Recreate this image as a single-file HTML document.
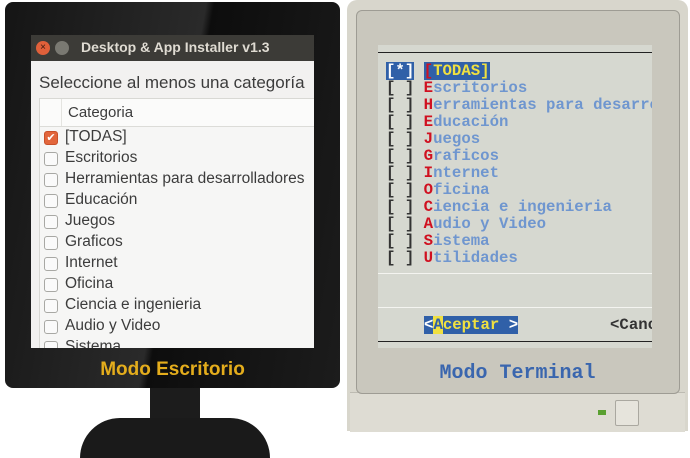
<!DOCTYPE html>
<html><head><style>
body{margin:0;width:690px;height:431px;background:#fff;position:relative;overflow:hidden;font-family:"Liberation Sans",sans-serif}
.a{position:absolute}
.l{left:65px;font-size:15.5px;color:#3c3c3c;white-space:nowrap}
.cb{left:44px;width:12px;height:12px;border:1px solid #a8a8a4;border-radius:3px;background:#fafafa}
.m{font-family:"Liberation Mono",monospace;font-size:15.7px;font-weight:bold;white-space:pre;color:#6f96cf}
.r{color:#d01020}
.k{color:#333}
</style></head><body>
<!-- left monitor -->
<div class="a" style="left:150px;top:380px;width:50px;height:45px;background:#1c1c1c"></div>
<div class="a" style="left:80px;top:418px;width:190px;height:40px;background:#1a1a1a;border-radius:95px 95px 0 0"></div>
<div class="a" style="left:5px;top:2px;width:335px;height:386px;background:linear-gradient(100deg,#151515 0%,#2a2a2a 50%,#0d0d0d 52%,#1c1c1c 100%);border-radius:8px"></div>
<div class="a" style="left:31px;top:35px;width:283px;height:313px;background:#f2f1f0;overflow:hidden">
 <div class="a" style="left:0;top:0;width:283px;height:26px;background:#3c3b37"></div>
 <div class="a" style="left:5px;top:6px;width:14px;height:14px;border-radius:50%;background:#e0603a;color:#3a1a10;font-size:10px;text-align:center;line-height:14px">×</div>
 <div class="a" style="left:24px;top:6px;width:14px;height:14px;border-radius:50%;background:#7a7972"></div>
 <div class="a" style="left:50px;top:4px;color:#dfdbd2;font-size:14px;font-weight:bold">Desktop &amp; App Installer v1.3</div>
 <div class="a" style="left:8px;top:38px;color:#3c3c3c;font-size:17px;white-space:nowrap">Seleccione al menos una categoría</div>
 <div class="a" style="left:8px;top:63px;width:280px;height:250px;background:#f6f6f5;border:1px solid #d8d8d4"></div>
 <div class="a" style="left:9px;top:64px;width:280px;height:27px;background:#fbfbfa;border-bottom:1px solid #dcdcd8"></div>
 <div class="a" style="left:30px;top:64px;width:1px;height:27px;background:#e4e4e0"></div>
</div>
<div class="a" style="left:68px;top:104px;font-size:15px;color:#3c3c3c">Categoria</div>
<div class="a cb" style="top:131px;background:#e2663c;border-color:#c8502a;color:#fff;font-size:11px;line-height:12px;text-align:center">✔</div>
<div class="a l" style="top:128px">[TODAS]</div>
<div class="a cb" style="top:152px"></div><div class="a l" style="top:149px">Escritorios</div>
<div class="a cb" style="top:173px"></div><div class="a l" style="top:170px">Herramientas para desarrolladores</div>
<div class="a cb" style="top:194px"></div><div class="a l" style="top:191px">Educación</div>
<div class="a cb" style="top:215px"></div><div class="a l" style="top:212px">Juegos</div>
<div class="a cb" style="top:236px"></div><div class="a l" style="top:233px">Graficos</div>
<div class="a cb" style="top:257px"></div><div class="a l" style="top:254px">Internet</div>
<div class="a cb" style="top:278px"></div><div class="a l" style="top:275px">Oficina</div>
<div class="a cb" style="top:299px"></div><div class="a l" style="top:296px">Ciencia e ingenieria</div>
<div class="a cb" style="top:320px"></div><div class="a l" style="top:317px">Audio y Video</div>
<div class="a" style="left:31px;top:340px;width:283px;height:8px;overflow:hidden"><div class="a cb" style="left:13px;top:1px"></div><div class="a l" style="left:34px;top:-2px">Sistema</div></div>
<div class="a" style="left:0;top:359px;width:345px;text-align:center;color:#e4ad1c;font-size:19px;font-weight:bold">Modo Escritorio</div>

<!-- right monitor -->
<div class="a" style="left:347px;top:0;width:341px;height:431px;background:#d8d6cc;border-radius:10px 10px 0 0"></div>
<div class="a" style="left:350px;top:392px;width:335px;height:39px;background:#dedcd3;border-top:1px solid #bdbbb2"></div>
<div class="a" style="left:356px;top:10px;width:322px;height:382px;background:#c9c7bd;border-radius:6px;border:1px solid #9e9c94"></div>
<div class="a" style="left:378px;top:45px;width:274px;height:303px;background:#d6d8d0;overflow:hidden">
 <div class="a" style="left:0;top:7px;width:274px;height:1px;background:#222"></div>
 <div class="a" style="left:0;top:228px;width:274px;height:1px;background:#f4f4f0"></div>
 <div class="a" style="left:0;top:262px;width:274px;height:1px;background:#f4f4f0"></div>
 <div class="a" style="left:0;top:296px;width:274px;height:1px;background:#222"></div>
 <div class="a m" style="left:8px;top:18px;line-height:17px"><span style="background:#3060a8;color:#fff">[*]</span> <span style="background:#3060a8;color:#f0e040"><span class="r">[</span>TODAS]</span>
<span class="k">[ ]</span> <span class="r">E</span>scritorios
<span class="k">[ ]</span> <span class="r">H</span>erramientas para desarrolladores
<span class="k">[ ]</span> <span class="r">E</span>ducación
<span class="k">[ ]</span> <span class="r">J</span>uegos
<span class="k">[ ]</span> <span class="r">G</span>raficos
<span class="k">[ ]</span> <span class="r">I</span>nternet
<span class="k">[ ]</span> <span class="r">O</span>ficina
<span class="k">[ ]</span> <span class="r">C</span>iencia e ingenieria
<span class="k">[ ]</span> <span class="r">A</span>udio y Video
<span class="k">[ ]</span> <span class="r">S</span>istema
<span class="k">[ ]</span> <span class="r">U</span>tilidades</div>
 <div class="a m" style="left:46px;top:271px;background:#3060a8;color:#fff">&lt;<span style="background:#f0e040;color:#3060a8">A</span><span style="color:#f0e040">ceptar</span> &gt;</div>
 <div class="a m" style="left:232px;top:271px;color:#333">&lt;Cancelar&gt;</div>
</div>
<div class="a" style="left:347px;top:362px;width:341px;text-align:center;font-family:'Liberation Mono',monospace;font-weight:bold;font-size:20px;color:#3a66ae">Modo Terminal</div>
<div class="a" style="left:598px;top:410px;width:8px;height:5px;background:#5aa030"></div>
<div class="a" style="left:615px;top:400px;width:22px;height:24px;background:#e6e4dc;border:1px solid #aaa8a0;border-radius:2px"></div>
</body></html>
